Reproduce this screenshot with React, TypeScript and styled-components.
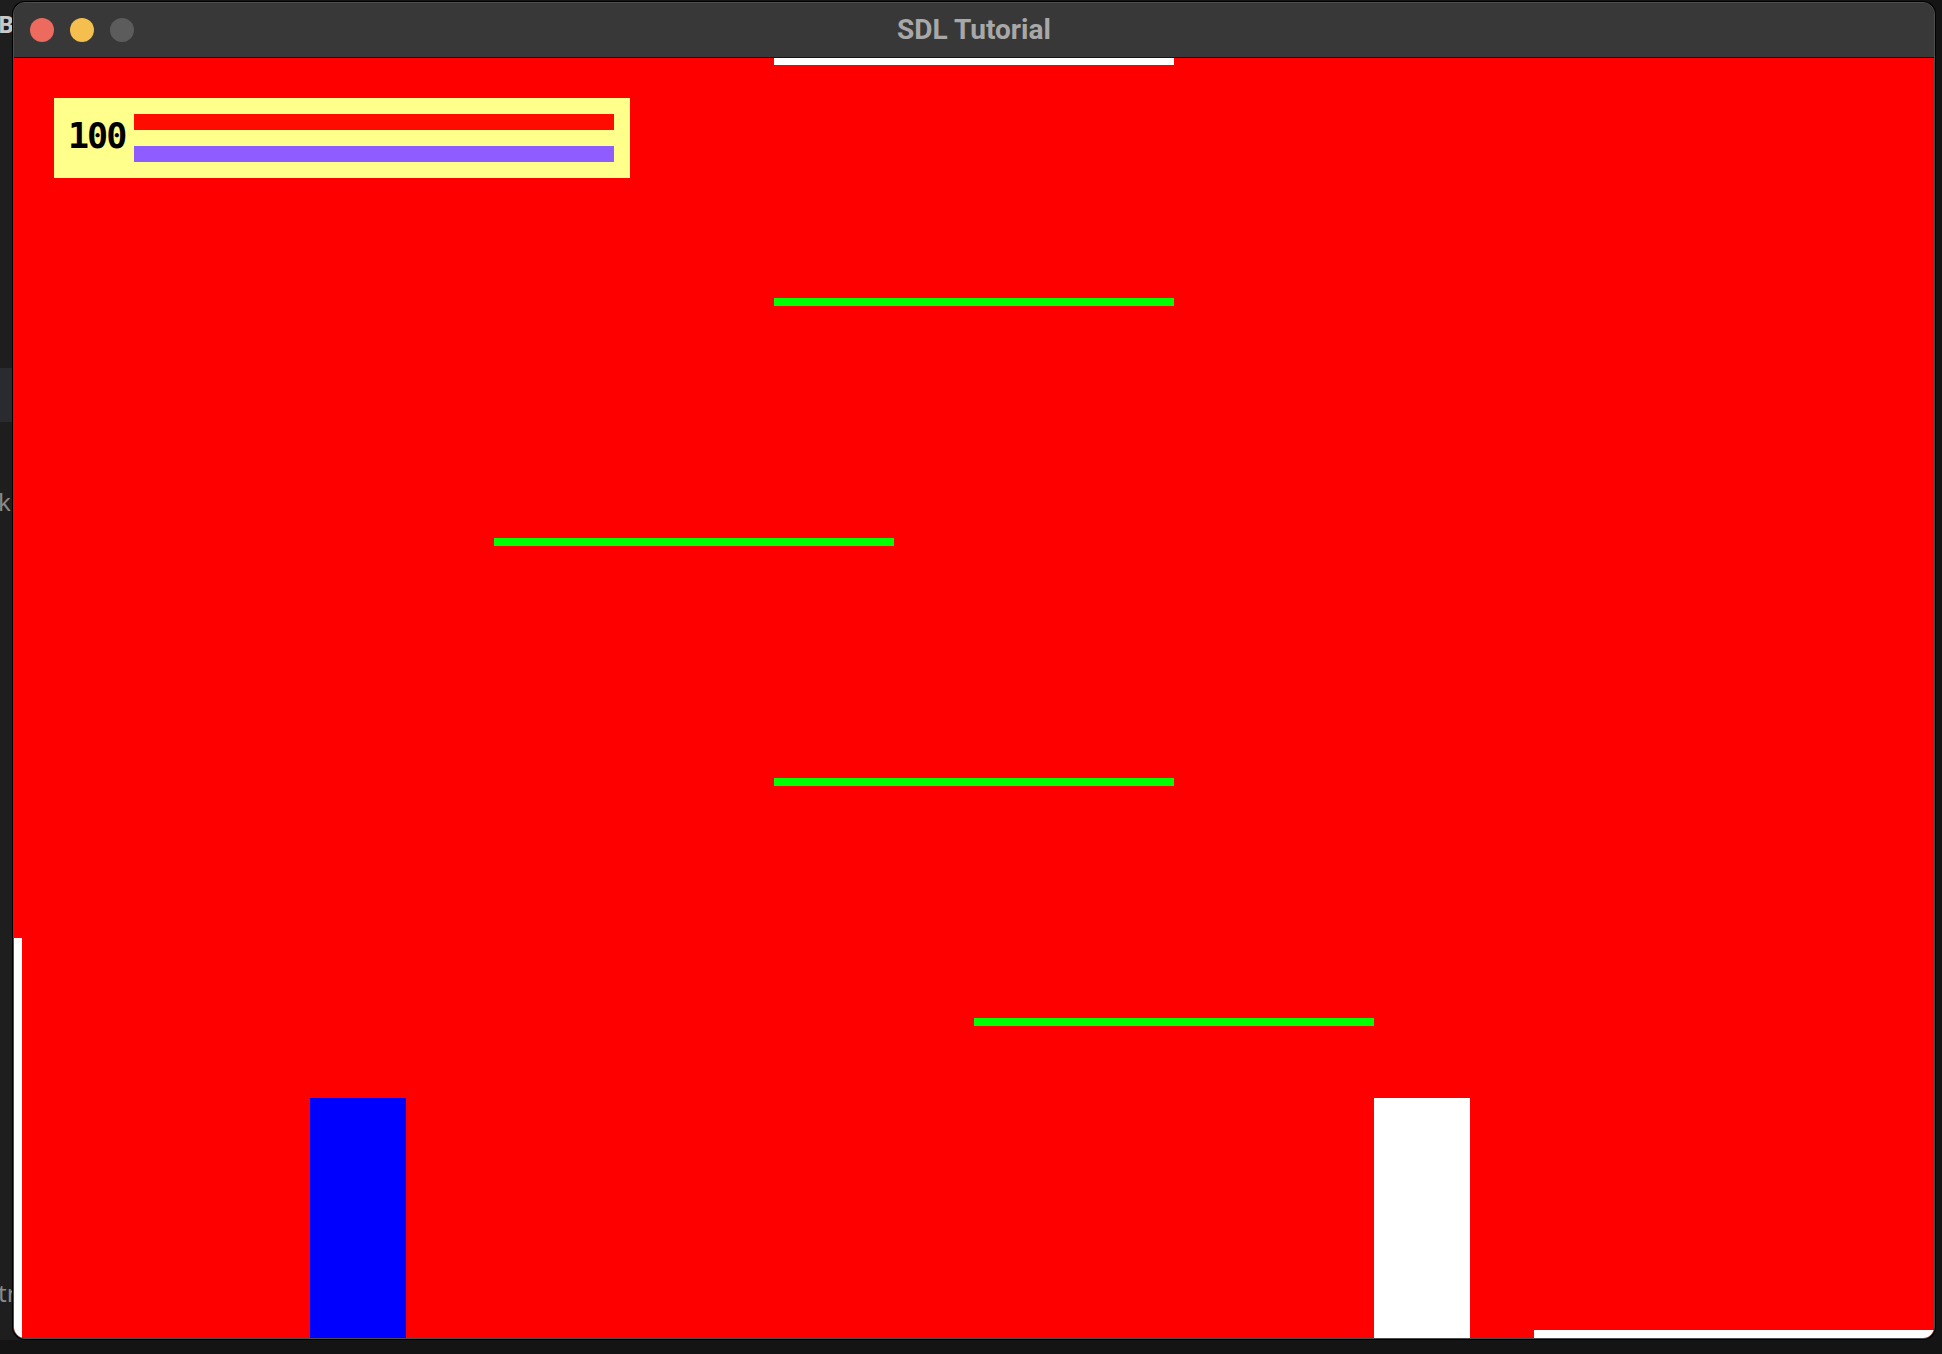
import styled, { createGlobalStyle } from "styled-components";

const GlobalStyle = createGlobalStyle`
  html, body {
    margin: 0;
    padding: 0;
    background: #161616;
    overflow: hidden;
  }
  #root {
    width: 1942px;
    height: 1354px;
  }
`;

const Desktop = styled.div`
  position: relative;
  width: 1942px;
  height: 1354px;
  background: #141414;
  overflow: hidden;
  font-family: "Liberation Sans", Arial, sans-serif;
`;

// editor window sitting behind the SDL window; only its left edge peeks out
const BackWindow = styled.div`
  position: absolute;
  left: 0;
  top: 0;
  width: 40px;
  height: 1340px;
  background: #1e1e1e;
`;

const BackLabel = styled.span<{ $top: number }>`
  position: absolute;
  left: -2px;
  top: ${(p) => p.$top}px;
  font-family: "Noto Sans", sans-serif;
  font-size: 24px;
  font-weight: 700;
  color: #c8c8c8;
  line-height: 1;
`;

const BackDim = styled(BackLabel)`
  font-weight: 400;
  color: #8a8a8a;
`;

const BackBand = styled.div`
  position: absolute;
  left: 0;
  top: 368px;
  width: 40px;
  height: 54px;
  background: #2a2b2f;
`;

const Window = styled.div`
  position: absolute;
  left: 13px;
  top: 2px;
  width: 1920px;
  border: 1px solid #4e4e4e;
  border-radius: 12px;
  overflow: hidden;
  background: #383838;
  box-shadow: 0 0 0 1px #000;
`;

const TitleBar = styled.div`
  height: 54px;
  border-bottom: 1px solid #141414;
  background: #383838;
  display: grid;
  grid-template-columns: 1fr auto 1fr;
  align-items: center;
`;

const Lights = styled.div`
  display: flex;
  gap: 16px;
  padding-left: 16px;
  margin-top: -1px;
`;

const Light = styled.span<{ $color: string }>`
  width: 24px;
  height: 24px;
  border-radius: 50%;
  background: ${(p) => p.$color};
`;

const Title = styled.div`
  font-family: Roboto, "Noto Sans", sans-serif;
  font-weight: 700;
  font-size: 28px;
  color: #a8a8a8;
  margin-top: -1px;
`;

const Canvas = styled.div`
  position: relative;
  width: 1920px;
  height: 1280px;
  background: #ff0000;
  overflow: hidden;
`;

const Sprite = styled.div<{ $color: string }>`
  position: absolute;
  background: ${(p) => p.$color};
`;

const Hud = styled.div`
  position: absolute;
  left: 40px;
  top: 40px;
  width: 576px;
  height: 80px;
  box-sizing: border-box;
  padding: 16px 16px 16px 14px;
  background: #ffff8c;
  display: flex;
  align-items: center;
`;

const Score = styled.div`
  width: 66px;
  font-family: "DejaVu Sans Mono", monospace;
  font-weight: 700;
  font-size: 35px;
  letter-spacing: -2px;
  line-height: 1;
  color: #000;
  margin-top: -4px;
`;

const Bars = styled.div`
  width: 480px;
  display: flex;
  flex-direction: column;
  gap: 16px;
`;

const Bar = styled.div<{ $color: string }>`
  height: 16px;
  background: ${(p) => p.$color};
`;

type Rect = { x: number; y: number; w: number; h: number; color: string };

const sprites: Rect[] = [
  { x: 760, y: 0, w: 400, h: 7, color: "#ffffff" },
  { x: 760, y: 240, w: 400, h: 8, color: "#00ff00" },
  { x: 480, y: 480, w: 400, h: 8, color: "#00ff00" },
  { x: 760, y: 720, w: 400, h: 8, color: "#00ff00" },
  { x: 960, y: 960, w: 400, h: 8, color: "#00ff00" },
  { x: 296, y: 1040, w: 96, h: 240, color: "#0000ff" },
  { x: 1360, y: 1040, w: 96, h: 240, color: "#ffffff" },
  { x: 0, y: 880, w: 8, h: 400, color: "#ffffff" },
  { x: 1520, y: 1272, w: 400, h: 8, color: "#ffffff" },
];

export default function App() {
  return (
    <>
      <GlobalStyle />
      <Desktop>
        <BackWindow>
          <BackLabel $top={12}>B</BackLabel>
          <BackBand />
          <BackDim $top={490}>k.</BackDim>
          <BackDim $top={1281}>tr</BackDim>
        </BackWindow>
        <Window>
          <TitleBar>
            <Lights>
              <Light $color="#ec6a5e" />
              <Light $color="#f4bf4f" />
              <Light $color="#5c5c5c" />
            </Lights>
            <Title>SDL Tutorial</Title>
            <span />
          </TitleBar>
          <Canvas>
            {sprites.map((s, i) => (
              <Sprite
                key={i}
                $color={s.color}
                style={{ left: s.x, top: s.y, width: s.w, height: s.h }}
              />
            ))}
            <Hud>
              <Score>100</Score>
              <Bars>
                <Bar $color="#ff0c00" />
                <Bar $color="#8f5cff" />
              </Bars>
            </Hud>
          </Canvas>
        </Window>
      </Desktop>
    </>
  );
}
